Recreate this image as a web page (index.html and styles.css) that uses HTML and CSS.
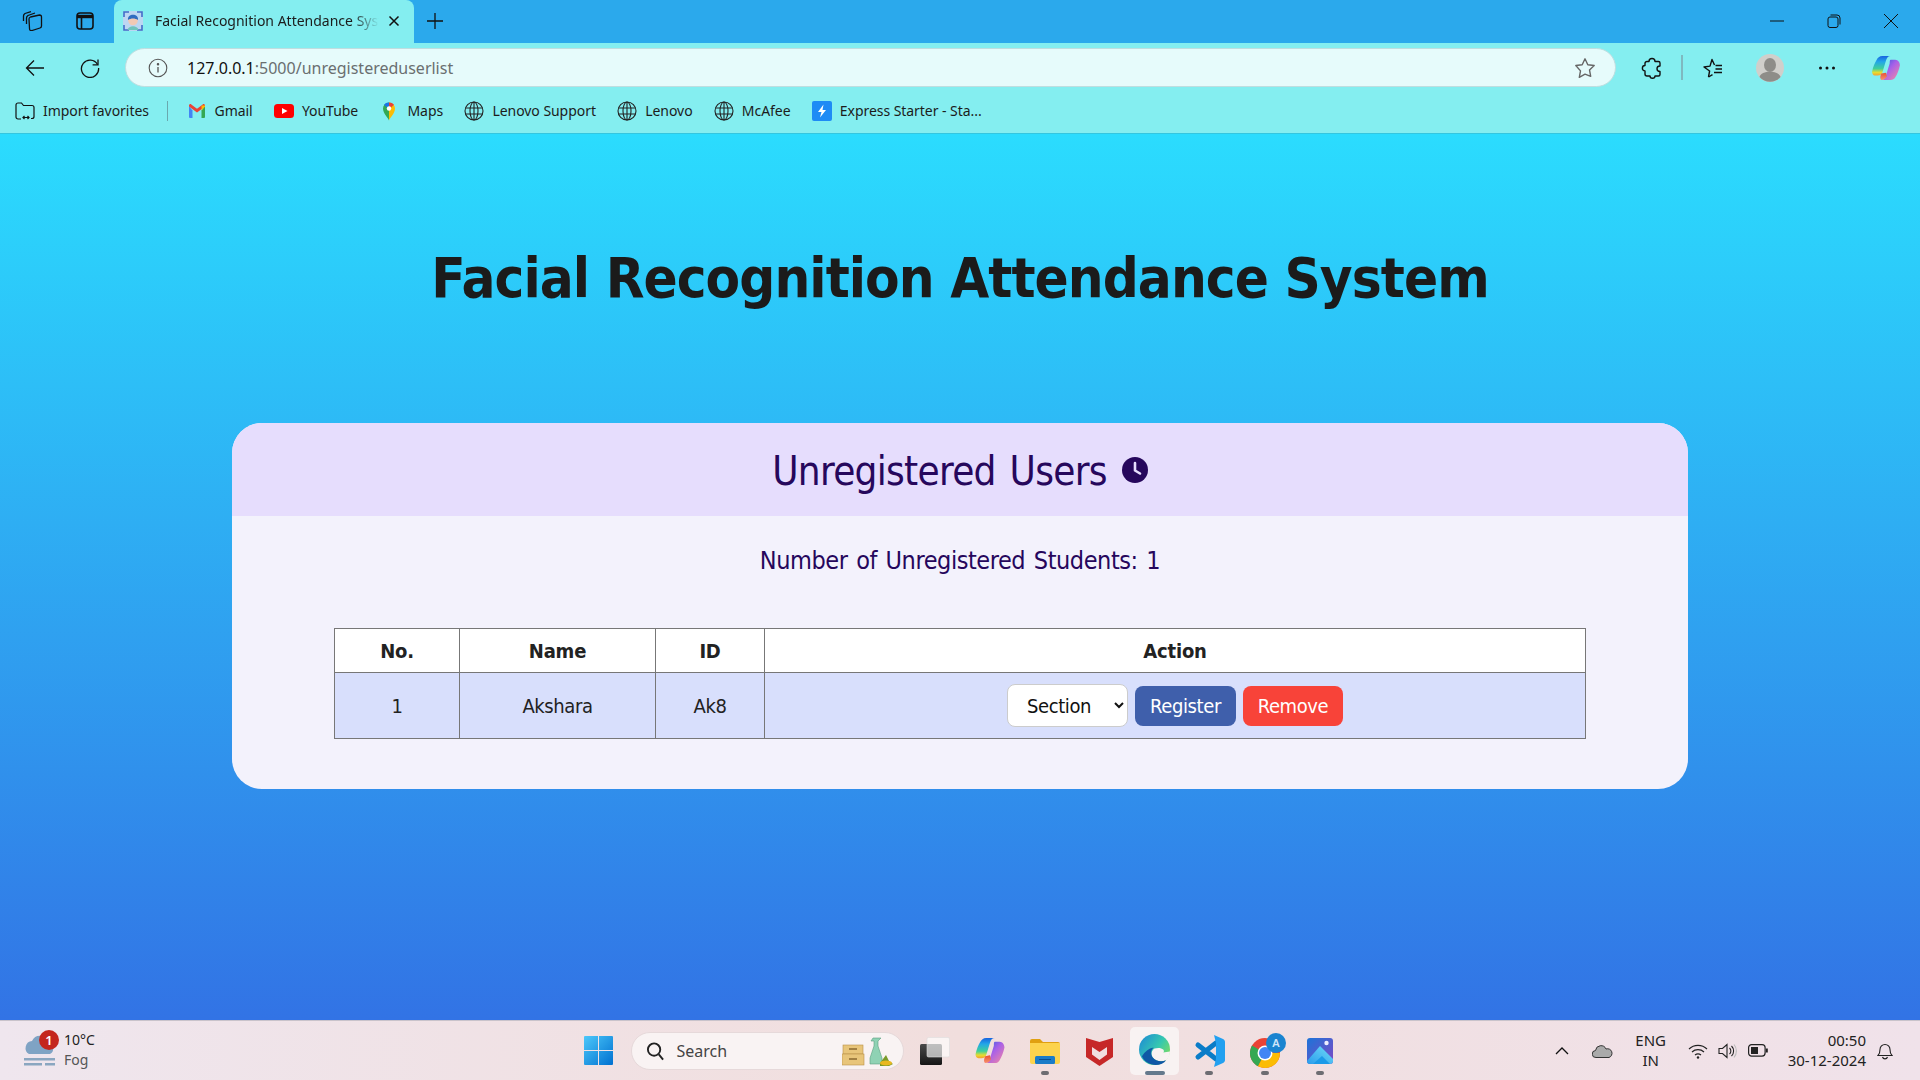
FILE: index.html
```html
<!DOCTYPE html>
<html lang="en">
<head>
<meta charset="utf-8">
<title>Facial Recognition Attendance System</title>
<link rel="stylesheet" href="styles.css">
</head>
<body>
<header class="browser">
  <div class="tabstrip">
    <svg class="workspace" viewBox="0 0 22 20" fill="none" stroke="#111" stroke-width="1.3"><path d="M7 8q0-1.5 1.500-2l9-2q2 0 2 2v9q0 1.500-1.500 2l-8 2.500q-2.500.5-2.500-2Z"/><path d="M4.500 13V7q0-1.500 1.500-2.500L13 2"/><path d="M1.500 10V5q0-1.500 1.500-2.500L9 .7"/></svg>
    <svg class="tabs-ico" viewBox="0 0 18 18" fill="none" stroke="#111" stroke-width="1.6"><rect x="1" y="1" width="16" height="16" rx="3"/><path d="M1 4.500h16" stroke-width="3.400"/><path d="M5.500 5v12"/></svg>
    <div class="tab">
      <svg class="favicon" viewBox="0 0 20 20"><rect width="20" height="20" rx="2" fill="#bcd6f2"/><path d="M1 6V1h5M14 1h5v5M19 14v5h-5M6 19H1v-5" fill="none" stroke="#3f6fc8" stroke-width="1.600"/><circle cx="10" cy="9.500" r="4.800" fill="#f2c9b4"/><path d="M5 9c-1-7 11-7 10 0-3-2-7-2-10 0Z" fill="#2f6cc0"/><path d="M4.500 19c1-5 10-5 11 0Z" fill="#70c4bc"/></svg>
      <span class="tab-title">Facial Recognition Attendance System</span>
      <svg class="tab-close" viewBox="0 0 12 12" stroke="#111" stroke-width="1.500"><path d="M1.500 1.500l9 9M10.500 1.500l-9 9"/></svg>
    </div>
    <svg class="newtab" viewBox="0 0 18 18" stroke="#111" stroke-width="1.300"><path d="M9 1v16M1 9h16"/></svg>
    <div class="winctl">
      <svg class="win-ico" viewBox="0 0 14 14" stroke="#111" stroke-width="1" fill="none"><path d="M0 7h14"/></svg>
      <svg class="win-ico" viewBox="0 0 14 14" stroke="#111" stroke-width="1" fill="none"><rect x="1" y="3" width="10" height="10.500" rx="2"/><path d="M3.500 1H10a3 3 0 0 1 3 3v6.500"/></svg>
      <svg class="win-ico" viewBox="0 0 14 14" stroke="#111" stroke-width="1" fill="none"><path d="M0 0l14 14M14 0L0 14"/></svg>
    </div>
  </div>
  <div class="toolbar">
    <svg class="ico20 back" viewBox="0 0 20 20" fill="none" stroke="#111" stroke-width="1.300"><path d="M19 10H1.500M9 2.500 1.500 10 9 17.500"/></svg>
    <svg class="ico20 reload" viewBox="0 0 20 20" fill="none" stroke="#111" stroke-width="1.300"><path d="M17.500 6.500A8.600 8.600 0 1 0 18.600 10"/><path d="M18 1.500v5.400h-5.400"/></svg>
    <div class="addr">
      <svg class="info" viewBox="0 0 20 20" fill="none" stroke="#555" stroke-width="1.100"><circle cx="10" cy="10" r="8.800"/><path d="M10 9v5.500" stroke-width="1.300"/><circle cx="10" cy="6.200" r=".7" fill="#555"/></svg>
      <span class="url"><span class="url-host">127.0.0.1</span>:5000/unregistereduserlist</span>
      <svg class="star" viewBox="0 0 22 22" fill="none" stroke="#666" stroke-width="1.400" stroke-linejoin="round"><path d="M11 1.800l2.800 5.900 6.400.8-4.700 4.400 1.200 6.400L11 17.200l-5.700 3.100 1.200-6.400L1.800 8.500l6.400-.8Z"/></svg>
    </div>
    <svg class="ico22 puzzle" viewBox="0 0 22 22" fill="none" stroke="#111" stroke-width="1.400" stroke-linejoin="round"><path d="M8 4.500c0-4 6-4 6 0h3.500A1.500 1.500 0 0 1 19 6v3c-4 0-4 5.500 0 5.500v3a1.500 1.500 0 0 1-1.500 1.500H14c0 3-5 3-5 0H6a2 2 0 0 1-2-2v-3c-3.500 0-3.500-5.500 0-5.500V6.500a2 2 0 0 1 2-2Z"/></svg>
    <span class="tool-sep"></span>
    <svg class="ico22 fav" viewBox="0 0 22 22" fill="none" stroke="#111" stroke-width="1.400" stroke-linejoin="round"><path d="M14.500 8.500H21M14.500 12H21M13 15.500h8M7.500 20 8.600 14 3 10l6-.9L11 2.500l2.500 5.500"/><path d="M7.500 20l4-2.300"/></svg>
    <svg class="avatar" viewBox="0 0 28 28"><circle cx="14" cy="14" r="14" fill="#d0cfcb"/><ellipse cx="14" cy="11" rx="6" ry="7" fill="#8e8d89"/><path d="M3.500 23c1.500-7 19.500-7 21 0a14 14 0 0 1-21 0Z" fill="#8e8d89"/></svg>
    <svg class="ico20 dots" viewBox="0 0 20 20" fill="#111"><circle cx="3.500" cy="10" r="1.500"/><circle cx="10" cy="10" r="1.500"/><circle cx="16.500" cy="10" r="1.500"/></svg>
    <svg class="copilot" viewBox="0 0 30 28">
      <defs>
        <linearGradient id="cpA" x1="0" y1="0" x2="0" y2="1"><stop offset="0" stop-color="#1763e0"/><stop offset=".3" stop-color="#23a6e8"/><stop offset=".65" stop-color="#3fd09a"/><stop offset=".85" stop-color="#e6dc30"/><stop offset="1" stop-color="#f5a030"/></linearGradient>
        <linearGradient id="cpB" x1="0" y1="0" x2="1" y2="1"><stop offset="0" stop-color="#1f5fe0"/><stop offset=".45" stop-color="#a860e8"/><stop offset="1" stop-color="#f88aa0"/></linearGradient>
        <linearGradient id="cpC" x1="0" y1="0" x2="0" y2="1"><stop offset="0" stop-color="#e85030"/><stop offset="1" stop-color="#f89070"/></linearGradient>
      </defs>
      <path d="M11 1h9c-3 0-4 2-5 5l-4 13c-1 2-2 3-5 3H3c-2 0-3-2-3-4 1-5 3-10 5-13 1-2 3-4 6-4Z" fill="url(#cpA)"/>
      <path d="M20 5h5c3 0 5 3 5 6-1 5-3 10-5 13-1 2-3 3-5 3H10c3 0 4-2 5-5l4-13c0-2 0-4 1-4Z" fill="url(#cpB)"/>
      <path d="M10 20l5-1 1 4c-1 2-3 4-6 4-2-1-1-5 0-7Z" fill="url(#cpC)"/>
    </svg>
  </div>
  <nav class="bookmarks">
    <a class="bm bm-import">
      <svg class="ico20" viewBox="0 0 20 20" fill="none" stroke="#111" stroke-width="1.200"><path d="M6 18H3a2 2 0 0 1-2-2V4a2 2 0 0 1 2-2h3.500l2 2.500H17a2 2 0 0 1 2 2v9a2 2 0 0 1-2 2h-1"/><path d="M8 16.500h6M9.500 15 8 16.500 9.500 18M12.500 15l1.500 1.500-1.500 1.500"/></svg>
      Import favorites</a>
    <span class="bm-sep"></span>
    <a class="bm bm-gmail">
      <svg class="ico18" viewBox="0 0 18 18"><path d="M1 4v11a1 1 0 0 0 1 1h2.500V8.500Z" fill="#4285f4"/><path d="M13.500 8.500V16H16a1 1 0 0 0 1-1V4Z" fill="#34a853"/><path d="M1 4.500l8 6 8-6v-1c0-1.200-1.500-1.800-2.300-1.100L9 6.700 3.300 2.400C2.500 1.700 1 2.300 1 3.500Z" fill="#ea4335"/><path d="M13.500 3.500H17v1l-3.500 4Z" fill="#fbbc04"/></svg>
      Gmail</a>
    <a class="bm">
      <svg class="ico20" viewBox="0 0 20 20"><rect y="3" width="20" height="14" rx="3.500" fill="#f00"/><path d="M8 7l5.500 3L8 13Z" fill="#fff"/></svg>
      YouTube</a>
    <a class="bm">
      <svg class="ico20" viewBox="0 0 20 20"><path d="M10 19.500c-1-3-6-7-6-12a6 6 0 0 1 6-6Z" fill="#34a853"/><path d="M10 1.500a6 6 0 0 1 6 6c0 5-5 9-6 12Z" fill="#fbbc04"/><path d="M5 3.800a6 6 0 0 1 5-2.300v4a2 2 0 0 0-2 1Z" fill="#1a73e8"/><path d="M10 1.500a6 6 0 0 1 5 2.300l-3 2.700a2 2 0 0 0-2-1Z" fill="#ea4335"/><circle cx="10" cy="7.500" r="2.200" fill="#fff"/></svg>
      Maps</a>
    <a class="bm">
      <svg class="ico20" viewBox="0 0 20 20" fill="none" stroke="#222" stroke-width="1.100"><circle cx="10" cy="10" r="9"/><ellipse cx="10" cy="10" rx="4" ry="9"/><path d="M10 1v18M1.500 7h17M1.500 13h17"/></svg>
      Lenovo Support</a>
    <a class="bm">
      <svg class="ico20" viewBox="0 0 20 20" fill="none" stroke="#222" stroke-width="1.100"><circle cx="10" cy="10" r="9"/><ellipse cx="10" cy="10" rx="4" ry="9"/><path d="M10 1v18M1.500 7h17M1.500 13h17"/></svg>
      Lenovo</a>
    <a class="bm">
      <svg class="ico20" viewBox="0 0 20 20" fill="none" stroke="#222" stroke-width="1.100"><circle cx="10" cy="10" r="9"/><ellipse cx="10" cy="10" rx="4" ry="9"/><path d="M10 1v18M1.500 7h17M1.500 13h17"/></svg>
      McAfee</a>
    <a class="bm">
      <svg class="ico20" viewBox="0 0 20 20"><rect width="20" height="20" rx="2" fill="#1e8bf5"/><path d="M11.500 3.500 6 11h3.500L8 16.500 14 9h-3.500Z" fill="#fff"/></svg>
      Express Starter - Sta...</a>
  </nav>
</header>

<main class="page">
  <h1 class="title">Facial Recognition Attendance System</h1>
  <section class="card">
    <div class="card-head">
      <h2 class="card-title">Unregistered Users</h2>
      <svg class="clock" viewBox="0 0 26 26"><circle cx="13" cy="13" r="13" fill="#26075c"/><path d="M13 6v7.500l5 3" fill="none" stroke="#E6DDFD" stroke-width="2.600" stroke-linecap="round" stroke-linejoin="round"/></svg>
    </div>
    <div class="card-body">
      <p class="count">Number of Unregistered Students: 1</p>
      <table class="users">
        <colgroup><col class="c-no"><col class="c-name"><col class="c-id"><col class="c-act"></colgroup>
        <thead><tr><th>No.</th><th>Name</th><th>ID</th><th>Action</th></tr></thead>
        <tbody><tr>
          <td>1</td><td>Akshara</td><td>Ak8</td>
          <td><div class="actions">
            <select class="section"><option>Section</option></select>
            <button class="btn btn-reg">Register</button>
            <button class="btn btn-rem">Remove</button>
          </div></td>
        </tr></tbody>
      </table>
    </div>
  </section>
</main>

<footer class="taskbar">
  <div class="tb-left">
    <div class="weather-ico">
      <svg class="cloud" viewBox="0 0 31 34"><path d="M5 20a7 7 0 0 1 3-13 9 9 0 0 1 17 2 6 6 0 0 1 1 11Z" fill="#7fa3c4"/><path d="M0 24h31v2.500H0ZM0 29h18v2.500H0ZM21 29h10v2.500H21Z" fill="#8aa6c0"/></svg>
      <span class="badge">1</span>
    </div>
    <div class="weather-txt"><span>10°C</span><span class="fog">Fog</span></div>
  </div>
  <div class="tb-center">
    <svg class="winlogo" viewBox="0 0 29 29"><defs><linearGradient id="wl" x1="0" y1="0" x2="1" y2="1"><stop offset="0" stop-color="#4cc8fa"/><stop offset="1" stop-color="#0070d0"/></linearGradient></defs><path d="M1 0h13v14H0V1a1 1 0 0 1 1-1ZM15 0h13a1 1 0 0 1 1 1v13H15ZM0 15h14v14H1a1 1 0 0 1-1-1ZM15 15h14v13a1 1 0 0 1-1 1H15Z" fill="url(#wl)"/></svg>
    <div class="search">
      <svg class="search-ico" viewBox="0 0 20 20" fill="none" stroke="#222" stroke-width="2"><circle cx="8.500" cy="8.500" r="6.500"/><path d="M13.500 13.500 18 19"/></svg>
      <span class="search-txt">Search</span>
      <svg class="search-art" viewBox="0 0 51 30">
        <rect x="1" y="9" width="20" height="9" fill="#e8c57a" stroke="#b8924a" stroke-width=".6"/><rect y="18" width="22" height="11" fill="#e8c57a" stroke="#b8924a" stroke-width=".6"/><path d="M7 13h8M7 23h8" stroke="#8a6a30" stroke-width="1.500"/>
        <path d="M31 2h8l-3 3v5l4 12v6H28v-6l4-12V5h-3Z" fill="#8fd2b4" stroke="#5aa080" stroke-width=".6"/><path d="M38 27l6-8 3 6 4 3-4 2h-9Z" fill="#7a9a2a"/><ellipse cx="44" cy="27" rx="6" ry="2.500" fill="#e8b820"/>
      </svg>
    </div>
    <svg class="tk-view" viewBox="0 0 30 28"><defs><linearGradient id="tv" x1="0" y1="0" x2="0" y2="1"><stop offset="0" stop-color="#4a4a4a"/><stop offset="1" stop-color="#151515"/></linearGradient></defs><rect y="7" width="22" height="21" rx="1.500" fill="url(#tv)"/><rect x="7" y=".5" width="22.500" height="19.500" rx="1.500" fill="#fff" fill-opacity=".65" stroke="#ddd" stroke-width=".6"/></svg>
    <svg class="tk-cop" viewBox="0 0 30 28">
      <defs>
        <linearGradient id="cpA2" x1="0" y1="0" x2="0" y2="1"><stop offset="0" stop-color="#1763e0"/><stop offset=".3" stop-color="#23a6e8"/><stop offset=".65" stop-color="#3fd09a"/><stop offset=".85" stop-color="#e6dc30"/><stop offset="1" stop-color="#f5a030"/></linearGradient>
        <linearGradient id="cpB2" x1="0" y1="0" x2="1" y2="1"><stop offset="0" stop-color="#1f5fe0"/><stop offset=".45" stop-color="#a860e8"/><stop offset="1" stop-color="#f88aa0"/></linearGradient>
        <linearGradient id="cpC2" x1="0" y1="0" x2="0" y2="1"><stop offset="0" stop-color="#e85030"/><stop offset="1" stop-color="#f89070"/></linearGradient>
      </defs>
      <path d="M11 1h9c-3 0-4 2-5 5l-4 13c-1 2-2 3-5 3H3c-2 0-3-2-3-4 1-5 3-10 5-13 1-2 3-4 6-4Z" fill="url(#cpA2)"/>
      <path d="M20 5h5c3 0 5 3 5 6-1 5-3 10-5 13-1 2-3 3-5 3H10c3 0 4-2 5-5l4-13c0-2 0-4 1-4Z" fill="url(#cpB2)"/>
      <path d="M10 20l5-1 1 4c-1 2-3 4-6 4-2-1-1-5 0-7Z" fill="url(#cpC2)"/>
    </svg>
    <div class="tk-slot slot-folder">
      <svg class="tk-folder" viewBox="0 0 30 26"><path d="M0 3a2 2 0 0 1 2-2h8l3 3h15a2 2 0 0 1 2 2v3H0Z" fill="#e0a010"/><path d="M0 5h30v19a2 2 0 0 1-2 2H2a2 2 0 0 1-2-2Z" fill="#fcd34d"/><rect x="5" y="18" width="20" height="8" rx="1.500" fill="#1a7cc8"/><path d="M9 21.500h12" stroke="#0a4f90" stroke-width="1"/></svg>
    </div>
    <svg class="tk-mc" viewBox="0 0 27 30"><path d="M0 2 13.500 6 27 2v19l-13.500 9L0 21Z" fill="#c62828"/><path d="M6 11l7.500 5 7.500-5v7.500L13.500 24 6 18.500Z" fill="#f1dedf"/></svg>
    <div class="tk-active">
      <svg class="tk-edge" viewBox="0 0 32 32"><defs><linearGradient id="ed1" x1="0" y1="0" x2="1" y2=".7"><stop offset="0" stop-color="#1b86d8"/><stop offset=".6" stop-color="#35c8b0"/><stop offset="1" stop-color="#80dc5c"/></linearGradient></defs><circle cx="16" cy="16" r="16" fill="url(#ed1)"/><path d="M32 18c0 3-1 6-4 9-5 2-11 1-14-3-2-3-1-7 2-9 3-1 7-1 9 1 1 1 1 3 0 3Z" fill="#F8F2F2"/><path d="M3 23c2 5 8 9 14 9 5 0 9-2 11-5-5 2-11 1-14-3-2-3-2-7 1-10-5 1-9 4-12 9Z" fill="#0f58a6"/></svg>
      <span class="ind-wide"></span>
    </div>
    <div class="tk-slot slot-vs">
      <svg class="tk-vs" viewBox="0 0 31 34"><path d="M4 11l18 14M4 23l18-14" stroke="#0a7cc8" stroke-width="5" stroke-linecap="round" fill="none"/><path d="M20 1l9 4c1.200.6 2 1.500 2 3v18c0 1.500-.8 2.400-2 3l-9 4 2-8V9Z" fill="#22a0f0"/></svg>
    </div>
    <div class="tk-slot slot-chrome">
      <svg class="tk-chrome" viewBox="0 0 36 36"><circle cx="15" cy="20" r="15" fill="#ea4335"/><path d="M15 20 2 12.500A15 15 0 0 0 8 33.300Z" fill="#34a853"/><path d="M15 20 8 33.300A15 15 0 0 0 30 20Z" fill="#fbbc04"/><circle cx="15" cy="20" r="7.500" fill="#fff"/><circle cx="15" cy="20" r="6" fill="#4285f4"/><circle cx="26" cy="10" r="10" fill="#1a84d0"/><text class="chrome-a" x="26" y="14">A</text></svg>
    </div>
    <div class="tk-slot slot-photos">
      <svg class="tk-photos" viewBox="0 0 26 26"><defs><linearGradient id="ph" x1="0" y1="0" x2="1" y2="1"><stop offset="0" stop-color="#1c74d8"/><stop offset="1" stop-color="#8048c4"/></linearGradient><linearGradient id="ph2" x1="0" y1="1" x2="1" y2="0"><stop offset="0" stop-color="#2a9cec"/><stop offset="1" stop-color="#6fdcf8"/></linearGradient></defs><rect width="26" height="26" rx="3" fill="url(#ph)"/><circle cx="19.500" cy="5" r="2.200" fill="#eef"/><path d="M0 23 13 8l13 13v2a3 3 0 0 1-3 3H3a3 3 0 0 1-3-3Z" fill="url(#ph2)"/><path d="M6 26l9-8 8 8Z" fill="#1c9ae8"/></svg>
    </div>
  </div>
  <div class="tb-right">
    <svg class="chev" viewBox="0 0 14 8" fill="none" stroke="#111" stroke-width="1.300"><path d="M1 7l6-6 6 6"/></svg>
    <svg class="onedrive" viewBox="0 0 21 14"><path d="M4 13.500a3.500 3.500 0 0 1-.5-7 5.500 5.500 0 0 1 10.500-1.500 4.500 4.500 0 0 1 3 8.500Z" fill="#aaa" stroke="#333" stroke-width="1"/></svg>
    <div class="lang"><span>ENG</span><span>IN</span></div>
    <svg class="wifi" viewBox="0 0 20 16" fill="none" stroke="#222" stroke-width="1.200"><path d="M1 6a13 13 0 0 1 18 0M4 9a9 9 0 0 1 12 0M7 12a5 5 0 0 1 6 0"/><circle cx="10" cy="14.500" r="1.200" fill="#222" stroke="none"/></svg>
    <svg class="vol" viewBox="0 0 20 16" fill="none" stroke="#222" stroke-width="1.100"><path d="M1 5.500h3.500L9 1.500v13l-4.500-4H1Z"/><path d="M11.500 5a4 4 0 0 1 0 6M13.500 3a7 7 0 0 1 0 10"/><path d="M16 1.500a10 10 0 0 1 0 13" stroke="#bbb"/></svg>
    <svg class="batt" viewBox="0 0 20 13" fill="none" stroke="#222" stroke-width="1.200"><rect x=".6" y=".6" width="16.500" height="11.500" rx="3"/><rect x="3" y="3" width="7" height="7" fill="#222" stroke="none"/><path d="M18.800 4.500v4" stroke-width="2"/></svg>
    <div class="clocktxt"><span>00:50</span><span>30-12-2024</span></div>
    <svg class="bell" viewBox="0 0 16 18" fill="none" stroke="#222" stroke-width="1.100"><path d="M1 13.500c1.500-1.500 2-2.500 2-6a5 5 0 0 1 10 0c0 3.500.5 4.500 2 6Z"/><path d="M5.500 15a2.600 2.600 0 0 0 5 0"/></svg>
  </div>
</footer>
</body>
</html>
```
FILE: styles.css
```css
* { box-sizing: border-box; }
html, body { margin: 0; height: 100%; }
body {
  width: 1920px; height: 1080px; overflow: hidden;
  display: flex; flex-direction: column;
  font-family: "Noto Sans", sans-serif;
  color: #1c1c1c;
}
svg { display: block; flex: none; }
.ico18 { width: 18px; height: 18px; }
.ico20 { width: 20px; height: 20px; }
.ico22 { width: 22px; height: 22px; }

/* browser chrome */
.browser { flex: none; background: #84EEF0; border-bottom: 1px solid #33C6E0; }
.tabstrip { height: 43px; padding-bottom: 2px; background: #2BA9EC; display: flex; align-items: center; }
.workspace { width: 22px; height: 20px; margin-left: 22px; }
.tabs-ico { width: 18px; height: 18px; margin-left: 32px; }
.tab {
  width: 300px; height: 43px; margin-left: 20px; padding: 0 0 2px 9px; align-self: flex-start;
  background: #84EEF0; border-radius: 8px 8px 0 0;
  display: flex; align-items: center;
}
.favicon { width: 20px; height: 20px; }
.tab-title {
  width: 224px; margin-left: 12px; font-size: 14px; white-space: nowrap; overflow: hidden;
  -webkit-mask-image: linear-gradient(90deg, #000 88%, transparent 100%);
  mask-image: linear-gradient(90deg, #000 88%, transparent 100%);
}
.tab-close { width: 12px; height: 12px; margin-left: 9px; }
.newtab { width: 18px; height: 18px; margin-left: 12px; }
.winctl { margin-left: auto; display: flex; align-items: center; gap: 43px; padding-right: 22px; }
.win-ico { width: 14px; height: 14px; }

.toolbar { height: 47px; padding: 5px 0 3px 25px; display: flex; align-items: center; }
.reload { margin-left: 35px; }
.addr {
  width: 1491px; height: 39px; margin-left: 25px; padding: 0 19px 0 22px;
  background: #E6FBFB; border: 1px solid #BFDEE0; border-radius: 20px;
  display: flex; align-items: center;
}
.info { width: 20px; height: 20px; }
.url { margin-left: 19px; font-size: 16px; color: #6a6f70; white-space: nowrap; }
.url-host { color: #111; }
.star { width: 22px; height: 22px; margin-left: auto; }
.puzzle { margin-left: 25px; }
.tool-sep { width: 2px; height: 25px; margin-left: 18px; background: #7fb9c0; }
.fav { margin-left: 18px; }
.avatar { width: 28px; height: 28px; margin-left: 33px; }
.dots { margin-left: 33px; }
.copilot { width: 28px; height: 26px; margin-left: 35px; }

.bookmarks { height: 43px; padding: 0 0 2px 15px; display: flex; align-items: center; gap: 21.3px; font-size: 14px; letter-spacing: -.05px; }
.bm { display: flex; align-items: center; gap: 8px; white-space: nowrap; color: #1c1c1c; }
.bm-sep { width: 1px; height: 20px; background: #6aa8ae; margin: 0 -2px 0 -3px; }
.bm-gmail { gap: 9px; }

/* page */
.page {
  flex: 1; min-height: 0; padding-top: 110px;
  background: linear-gradient(180deg, #2BDCFE 0%, #3273E5 100%);
  font-family: "DejaVu Sans Condensed", "DejaVu Sans", sans-serif;
  font-stretch: condensed;
}
.title {
  margin: 0 0 111px; height: 68px; line-height: 68px; text-align: center;
  font-size: 56px; font-weight: 700; color: #1b1b1b; letter-spacing: -.95px;
}
.card { width: 1456px; margin: 0 auto; border-radius: 30px; overflow: hidden; background: #F3F2FC; }
.card-head { height: 93px; padding-top: 3px; background: #E6DDFD; display: flex; align-items: center; justify-content: center; gap: 15px; }
.card-title { margin: 0; font-size: 40px; font-weight: 400; color: #26075c; letter-spacing: -.7px; word-spacing: 3px; }
.clock { width: 26px; height: 26px; margin-top: -2px; }
.card-body { padding: 30px 102px 50px; }
.count { margin: 0 0 52px; height: 30px; line-height: 30px; text-align: center; font-size: 25px; color: #26075c; letter-spacing: -.45px; word-spacing: 2px; }
.users { width: 1251px; border-collapse: collapse; table-layout: fixed; font-size: 20px; color: #222; }
.c-no { width: 125px; } .c-name { width: 196px; } .c-id { width: 109px; } .c-act { width: 821px; }
.users th, .users td { border: 1px solid #777; text-align: center; padding: 0; }
.users th { height: 44px; background: #fff; font-weight: 700; letter-spacing: -.2px; }
.users td { height: 66px; background: #D8DFFC; letter-spacing: -.4px; }
.actions { display: flex; align-items: center; justify-content: center; gap: 7px; }
.section {
  width: 121px; height: 43px; padding: 0 0 0 15px; background: #fff; color: #111;
  border: 1px solid #ccc; border-radius: 8px; font: inherit; font-stretch: condensed; letter-spacing: -.4px;
}
.btn { height: 40px; border: 0; border-radius: 8px; color: #fff; font: inherit; font-stretch: condensed; letter-spacing: -.4px; padding: 0; }
.btn-reg { width: 101px; background: #3F5FAB; }
.btn-rem { width: 100px; background: #F84339; }

/* taskbar */
.taskbar {
  flex: none; height: 60px; border-top: 1px solid #c9c3cb;
  background: linear-gradient(90deg, #EFE6EE 0%, #F1DEDD 50%, #F0E2EA 100%);
  display: grid; grid-template-columns: 1fr auto 1fr; align-items: center;
  font-size: 14px; color: #222;
}
.tb-left { display: flex; align-items: center; padding-left: 24px; gap: 9px; }
.weather-ico { position: relative; width: 31px; height: 34px; }
.cloud { width: 31px; height: 34px; }
.badge {
  position: absolute; top: -4px; left: 15px; width: 20px; height: 20px; border-radius: 50%;
  background: #c4261d; color: #fff; font-size: 13px; line-height: 20px; text-align: center; font-weight: 600;
}
.weather-txt { display: flex; flex-direction: column; line-height: 20px; padding-bottom: 2px; }
.fog { color: #555; }
.tb-center { display: flex; align-items: center; margin-right: 4px; }
.winlogo { width: 29px; height: 29px; }
.search {
  width: 273px; height: 38px; margin-left: 18px; padding: 0 10px 0 14px;
  background: #F9F3F3; border: 1px solid #e6d9da; border-radius: 19px;
  display: flex; align-items: center;
}
.search-ico { width: 19px; height: 20px; }
.search-txt { margin-left: 12px; font-size: 16px; color: #444; }
.search-art { width: 51px; height: 30px; margin-left: auto; }
.tk-view { width: 30px; height: 28px; margin-left: 16px; }
.tk-cop { width: 30px; height: 27px; margin-left: 25px; }
.tk-slot { position: relative; height: 36px; display: flex; align-items: center; justify-content: center; }
.tk-slot::after {
  content: ""; position: absolute; bottom: -6px; left: 50%; width: 8px; height: 4px; margin-left: -4px;
  border-radius: 2px; background: #6d6d72;
}
.slot-folder { margin-left: 25px; }
.tk-folder { width: 30px; height: 26px; }
.tk-mc { width: 27px; height: 30px; margin-left: 26px; }
.tk-active {
  position: relative; width: 49px; height: 48px; margin-left: 17px; background: #F8F2F2; border-radius: 5px;
  display: flex; align-items: center; justify-content: center;
}
.tk-edge { width: 31px; height: 31px; margin-top: -2px; }
.ind-wide { position: absolute; bottom: 0; left: 15px; width: 20px; height: 4px; border-radius: 2px; background: #64798c; }
.slot-vs { margin-left: 15px; }
.tk-vs { width: 31px; height: 34px; }
.slot-chrome { margin-left: 25px; }
.slot-chrome::after { left: 15px; }
.tk-chrome { width: 36px; height: 36px; }
.chrome-a { font: 600 11px "Noto Sans", sans-serif; fill: #cfe6fa; text-anchor: middle; }
.slot-photos { margin-left: 21px; }
.tk-photos { width: 26px; height: 26px; }
.tb-right { display: flex; align-items: center; justify-content: flex-end; padding-right: 27px; }
.chev { width: 14px; height: 8px; }
.onedrive { width: 21px; height: 14px; margin-left: 23px; }
.lang { width: 60px; margin-left: 8px; padding-bottom: 2px; display: flex; flex-direction: column; align-items: center; line-height: 20px; font-size: 15px; }
.wifi { width: 20px; height: 16px; margin-left: 7px; }
.vol { width: 20px; height: 16px; margin-left: 10px; }
.batt { width: 20px; height: 13px; margin-left: 10px; }
.clocktxt { margin-left: 20px; padding-bottom: 2px; display: flex; flex-direction: column; align-items: flex-end; line-height: 20px; font-size: 15px; }
.bell { width: 16px; height: 18px; margin-left: 11px; }
```
